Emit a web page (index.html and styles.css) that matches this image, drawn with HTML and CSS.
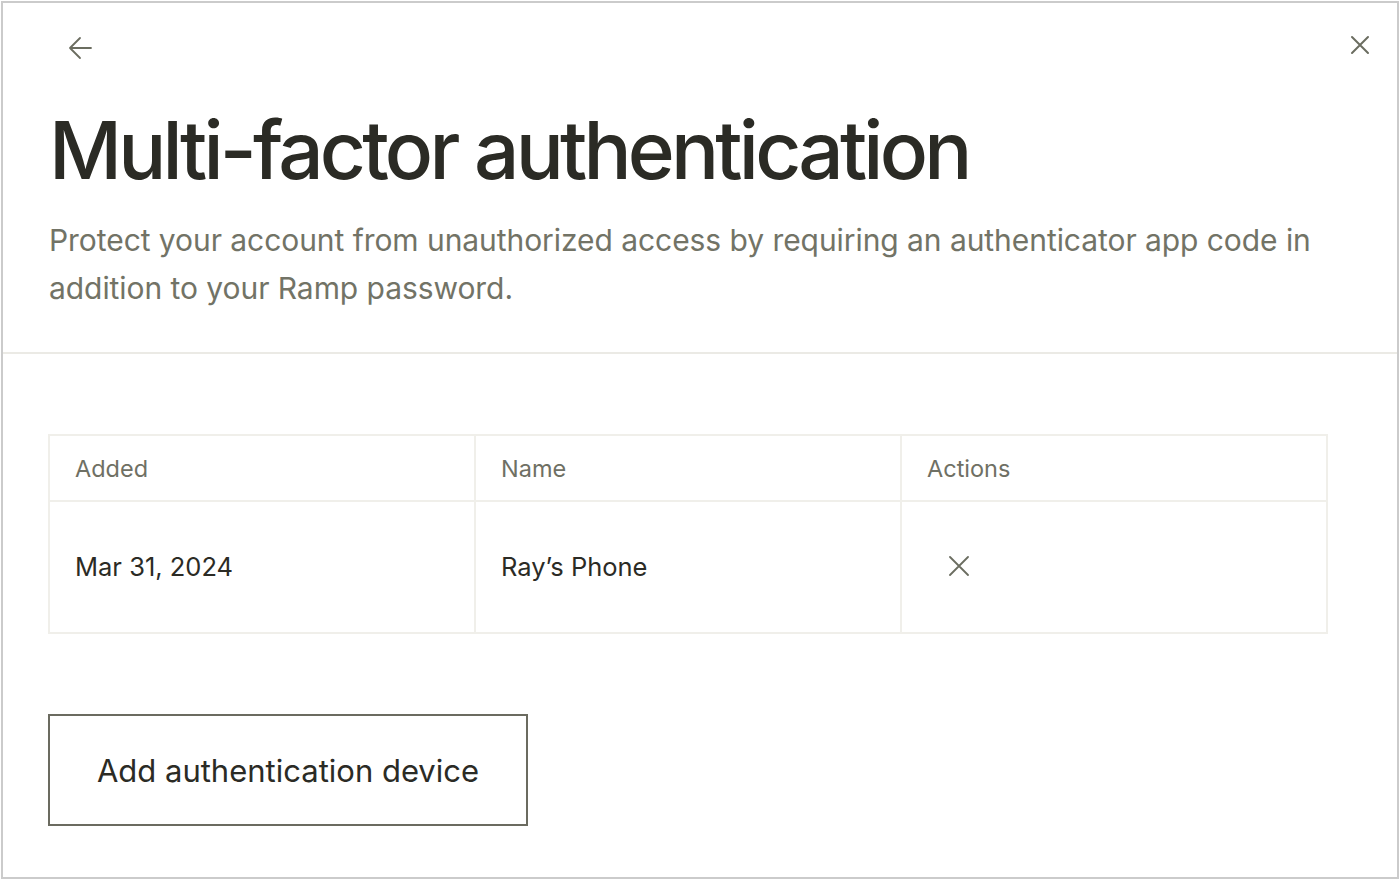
FILE: index.html
```html
<!DOCTYPE html>
<html lang="en">
<head>
<meta charset="utf-8">
<title>Multi-factor authentication</title>
<link rel="stylesheet" href="styles.css">
</head>
<body>
<div class="frame">
  <header class="topbar">
    <button class="icon-btn back" aria-label="Back">
      <svg width="26" height="26" viewBox="0 0 26 26" fill="none" stroke="currentColor" stroke-width="1.8" stroke-linecap="round" stroke-linejoin="round"><path d="M23 13H2M12 3L2 13l10 10"/></svg>
    </button>
    <button class="icon-btn close" aria-label="Close">
      <svg width="20" height="20" viewBox="0 0 20 20" fill="none" stroke="currentColor" stroke-width="2" stroke-linecap="round"><path d="M2 2l16 16M18 2L2 18"/></svg>
    </button>
  </header>
  <section class="intro">
    <h1 class="title">Multi-factor authentication</h1>
    <p class="subtitle">Protect your account from unauthorized access by requiring an authenticator app code in addition to your Ramp password.</p>
  </section>
  <div class="divider"></div>
  <section class="content">
    <table class="devices">
      <thead>
        <tr><th>Added</th><th>Name</th><th>Actions</th></tr>
      </thead>
      <tbody>
        <tr>
          <td>Mar 31, 2024</td>
          <td>Ray’s Phone</td>
          <td>
            <button class="icon-btn remove" aria-label="Remove">
              <svg width="20" height="20" viewBox="0 0 20 20" fill="none" stroke="currentColor" stroke-width="1.8" stroke-linecap="round"><path d="M1 1l18 18M19 1L1 19"/></svg>
            </button>
          </td>
        </tr>
      </tbody>
    </table>
    <button class="add-btn">Add authentication device</button>
  </section>
</div>
</body>
</html>
```

FILE: styles.css
```css
* { box-sizing: border-box; }
html, body { margin: 0; padding: 0; background: #ffffff; }
body {
  font-family: Inter, "Noto Sans", "Liberation Sans", sans-serif;
  color: #2b2b25;
}
.frame {
  margin: 1px;
  height: 878px;
  border: 2px solid #cbcbcb;
  background: #fff;
}
.topbar {
  display: flex;
  justify-content: space-between;
  align-items: flex-start;
  padding: 32px 27px 0 65px;
  height: 99px;
}
.icon-btn {
  background: none;
  border: 0;
  padding: 0;
  margin: 0;
  color: #6b6d60;
  display: flex;
  align-items: center;
  justify-content: center;
  cursor: pointer;
}
.intro {
  padding: 0 45px 40px 46px;
}
.title {
  margin: 0;
  font-size: 80px;
  line-height: 96px;
  font-weight: 500;
  letter-spacing: -3.8px;
  color: #2b2b25;
}
.subtitle {
  margin: 18px 0 0 0;
  font-size: 30px;
  line-height: 48px;
  letter-spacing: -0.06px;
  color: #727366;
  font-weight: 400;
}
.divider {
  height: 2px;
  background: #ebeae5;
}
.content {
  padding: 80px 45px 0 45px;
}
.devices {
  width: 1280px;
  border-collapse: collapse;
  table-layout: fixed;
  border: 2px solid #f0efea;
}
.devices th, .devices td {
  border: 2px solid #f0efea;
  text-align: left;
  padding: 0 0 0 25px;
}
.devices th {
  height: 66px;
  font-size: 23.5px;
  font-weight: 400;
  color: #6f7064;
}
.devices td {
  height: 132px;
  font-size: 25.5px;
  color: #2b2b25;
  padding-bottom: 2px;
}
.icon-btn.remove { margin-left: 22px; }
.add-btn {
  margin-top: 80px;
  width: 480px;
  height: 112px;
  background: #fff;
  border: 2px solid #6b6b60;
  font-family: inherit;
  font-size: 31px;
  color: #2b2b25;
  cursor: pointer;
}
```
